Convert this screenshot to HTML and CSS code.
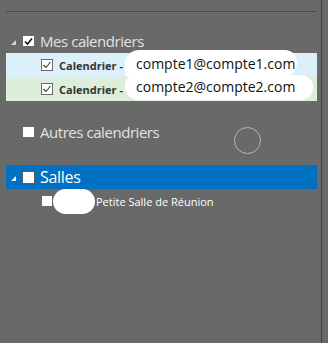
FILE: index.html
```html
<!DOCTYPE html>
<html>
<head lang="fr">
    <meta charset="UTF-8">
    <title>Calendriers</title>
    <link rel="stylesheet" href="styles.css">
</head>
<body>
    <!--panneau des dossiers-->
    <div class="pane">
        <div class="rule"></div>

        <!--Mes calendriers-->
        <div class="head">
            <span class="twisty"><svg width="5" height="5" viewBox="0 0 5 5"><polygon points="5,0 5,5 0,5" fill="#d6d6d6"/></svg></span>
            <span class="box box-head"><svg width="11" height="11" viewBox="0 0 11 11"><polyline points="2,5.5 4.5,8 9,2.5" fill="none" stroke="#111" stroke-width="1.6"/></svg></span>
            <span class="label">Mes calendriers</span>
        </div>
        <div class="items">
            <div class="item blue">
                <span class="box box-item"><svg width="10" height="10" viewBox="0 0 10 10"><polyline points="1.5,5 4,7.5 8.5,2" fill="none" stroke="#333" stroke-width="1.1"/></svg></span>
                <span class="name">Calendrier -</span>
            </div>
            <div class="item green">
                <span class="box box-item"><svg width="10" height="10" viewBox="0 0 10 10"><polyline points="1.5,5 4,7.5 8.5,2" fill="none" stroke="#333" stroke-width="1.1"/></svg></span>
                <span class="name">Calendrier -</span>
            </div>
            <div class="blob blob1">compte1@compte1.com</div>
            <div class="blob blob2">compte2@compte2.com</div>
        </div>

        <!--Autres calendriers-->
        <div class="head head-autres">
            <span class="twisty"></span>
            <span class="box box-head"></span>
            <span class="label">Autres calendriers</span>
        </div>

        <!--Salles-->
        <div class="head head-salles">
            <span class="twisty"><svg width="5" height="5" viewBox="0 0 5 5"><polygon points="5,0 5,5 0,5" fill="#e8f0f8"/></svg></span>
            <span class="box box-salles"></span>
            <span class="label">Salles</span>
        </div>
        <div class="item room">
            <span class="box box-room"></span>
            <span class="hide"></span>
            <span class="room-name">Petite Salle de Réunion</span>
        </div>

        <div class="spinner"></div>
    </div>
</body>
</html>
```

FILE: styles.css
```css
* {
    padding: 0;
    margin: 0;
    box-sizing: border-box;
}

body {
    background: #696969;
    font-family: "Open Sans", "Noto Sans", sans-serif;
}

.pane {
    position: relative;
    width: 322px;
    height: 343px;
    padding: 11px 4px 0 6px;
    border-right: 1px solid #3e3e3e;
}

.rule {
    height: 1px;
    background: #4a4a4a;
    margin-bottom: 17px;
}

.head {
    display: flex;
    align-items: center;
    height: 24px;
    padding-left: 5px;
    color: #e2e2e2;
    font-size: 15px;
    letter-spacing: -0.45px;
}

.twisty {
    display: flex;
    align-items: center;
    width: 12px;
    height: 24px;
    padding-top: 2px;
}

.box {
    display: flex;
    align-items: center;
    justify-content: center;
    background: #fff;
}

.box-head {
    width: 11px;
    height: 10px;
}

.head .label {
    margin-left: 6px;
}

.items {
    position: relative;
}

.item {
    display: flex;
    align-items: center;
    height: 24px;
    padding-left: 35px;
}

.blue {
    background: #dcf0fb;
}

.green {
    background: #ddefda;
}

.box-item {
    width: 12px;
    height: 12px;
    border: 1px solid #6a6a6a;
}

.name {
    margin-left: 6px;
    font-size: 11px;
    font-weight: bold;
    color: #333;
}

.blob {
    position: absolute;
    left: 119px;
    background: #fff;
    color: #111;
    font-size: 14px;
    padding-left: 11px;
    line-height: 24px;
}

.blob1 {
    top: -3px;
    width: 172px;
    height: 27px;
    padding-top: 2px;
    border-radius: 14px 12px 14px 4px;
}

.blob2 {
    top: 22px;
    width: 188px;
    height: 25px;
    border-radius: 10px 12px 12px 14px;
}

.head-autres {
    margin-top: 19px;
}

.head-salles {
    margin-top: 21px;
    background: #0070c2;
    color: #fff;
    font-size: 16px;
    letter-spacing: -0.3px;
}

.box-salles {
    width: 13px;
    height: 13px;
    margin-left: -1px;
    border: 1px solid #5c5c5c;
}

.head-salles .label {
    margin-left: 5px;
}

.room {
    padding-left: 36px;
}

.box-room {
    width: 10px;
    height: 10px;
}

.hide {
    width: 42px;
    height: 25px;
    margin-left: 1px;
    background: #fff;
    border-radius: 13px;
}

.room-name {
    margin-left: 1px;
    font-size: 11px;
    color: #fff;
}

.spinner {
    position: absolute;
    left: 234px;
    top: 127px;
    width: 27px;
    height: 27px;
    border: 1px solid #b8b8b8;
    border-radius: 50%;
}
```
